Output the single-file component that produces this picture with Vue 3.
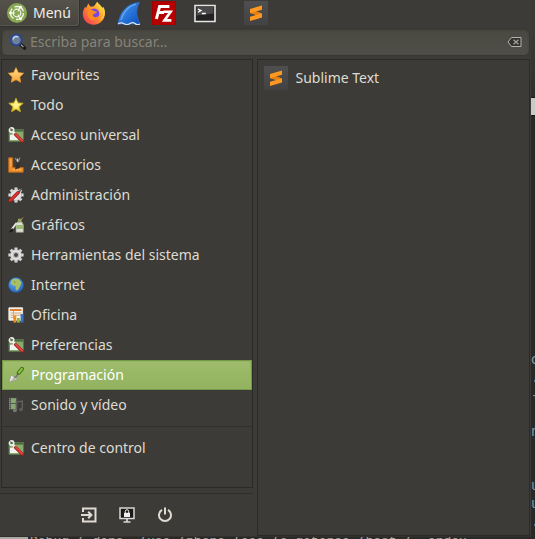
<script setup>
import { ref } from 'vue'

const query = ref('')
const selected = ref('Programación')
const categories = [
  { name: 'Favourites', icon: 'star' },
  { name: 'Todo', icon: 'star-yellow' },
  { name: 'Acceso universal', icon: 'tools' },
  { name: 'Accesorios', icon: 'accessories' },
  { name: 'Administración', icon: 'admin' },
  { name: 'Gráficos', icon: 'graphics' },
  { name: 'Herramientas del sistema', icon: 'gear' },
  { name: 'Internet', icon: 'globe' },
  { name: 'Oficina', icon: 'office' },
  { name: 'Preferencias', icon: 'tools' },
  { name: 'Programación', icon: 'trowel' },
  { name: 'Sonido y vídeo', icon: 'media' },
]
</script>

<template>
  <div class="desktop">
    <svg class="defs" aria-hidden="true">
      <defs>
        <linearGradient id="gStar" x1="0" y1="0" x2="0" y2="1"><stop offset="0" stop-color="#ffe08a" /><stop offset="1" stop-color="#f9a338" /></linearGradient>
        <linearGradient id="gYellow" x1="0" y1="0" x2="0" y2="1"><stop offset="0" stop-color="#fff7b0" /><stop offset="1" stop-color="#e9cf20" /></linearGradient>
        <linearGradient id="gFin" x1="0" y1="0" x2="1" y2="1"><stop offset="0" stop-color="#4a9cf5" /><stop offset="1" stop-color="#0a4fc0" /></linearGradient>
        <linearGradient id="gFire" x1="1" y1="0" x2="0" y2="1"><stop offset="0" stop-color="#fff44f" /><stop offset=".45" stop-color="#ff9a2a" /><stop offset="1" stop-color="#f5275e" /></linearGradient>
        <radialGradient id="gGlobe" cx=".4" cy=".3" r=".8"><stop offset="0" stop-color="#6fb2f2" /><stop offset="1" stop-color="#1f5db5" /></radialGradient>
        <linearGradient id="gTile" x1="0" y1="0" x2="0" y2="1"><stop offset="0" stop-color="#4f4f4f" /><stop offset="1" stop-color="#424243" /></linearGradient>
      </defs>
      <symbol id="i-star" viewBox="0 0 16 16"><path d="M8 .6l2.3 4.9 5.4.7-3.9 3.7.9 5.4L8 12.7 3.3 15.3l.9-5.4L.3 6.2l5.4-.7z" fill="url(#gStar)" stroke="#e8962f" stroke-width=".7" stroke-linejoin="round" /></symbol>
      <symbol id="i-star-yellow" viewBox="0 0 16 16"><path d="M8 1.2l2 4.6 5.2.5-3.9 3.5 1.1 4.9L8 12.2l-4.4 2.5 1.1-4.9L.8 6.3 6 5.8z" fill="url(#gYellow)" stroke="#c3a51c" stroke-width=".9" /><path d="M8 4l1 3 3 .2-2.4 2L10 12l-2-1.3L6 12l.5-2.8-2.4-2L7 7z" fill="#fff58a" /></symbol>
      <symbol id="i-tools" viewBox="0 0 16 16"><path d="M1 2.5h14.5v12H1z" fill="#88ab6c" stroke="#56724a" /><path d="M1.5 3h13.5v1.6H1.5z" fill="#4f6842" /><path d="M2 13V8l5-1 4 6z" fill="#f2f3ee" /><circle cx="3.6" cy="3" r="2.1" fill="none" stroke="#f0f0ee" stroke-width="1.6" /><path d="M0 0l3.4 2.8L1.6 0z" fill="#3c3b37" /><path d="M4.8 4.6l2.4 2.6" stroke="#eee" stroke-width="2.4" /><path d="M7.6 7.6l6.6 6.6" stroke="#951b1b" stroke-width="3.2" stroke-linecap="round" /><path d="M7.7 7.3l6.4 6.4" stroke="#e04340" stroke-width="2" stroke-linecap="round" /></symbol>
      <symbol id="i-accessories" viewBox="0 0 16 16"><path d="M.7.8h4v9.7h10.5v4.7H.7z" fill="#ee922f" stroke="#b9651c" /><path d="M2 3h1.4M2 5.5h1.4M2 8h1.4M6 12v1.4M9 12v1.4M12 12v1.4" stroke="#ffca7d" /><path d="M7.2 1l2.6 4L12 .8" fill="none" stroke="#8c8c8a" stroke-width="1.3" /><path d="M9.6 1.5v3" stroke="#ddd" /><path d="M8.6 5.5h3.2V11L7 12.5z" fill="#30302d" /></symbol>
      <symbol id="i-cog" viewBox="0 0 16 16"><g stroke="#d9d9d9" stroke-width="3"><path d="M8 .4v15.2M.4 8h15.2M2.7 2.7l10.6 10.6M13.3 2.7L2.7 13.3" /></g><circle cx="8" cy="8" r="5.5" fill="#e2e2e2" stroke="#aaa" stroke-width=".5" /></symbol>
      <symbol id="i-gear" viewBox="0 0 16 16"><use href="#i-cog" /><circle cx="8" cy="8" r="3.2" fill="#bcbcbc" /><circle cx="8" cy="8" r="2" fill="#4a4945" /></symbol>
      <symbol id="i-admin" viewBox="0 0 16 16"><use href="#i-cog" /><path d="M14 1.5L10 6" stroke="#555" stroke-width="1.3" /><path d="M10 5.8L2 13.7" stroke="#8c1818" stroke-width="3.4" stroke-linecap="round" /><path d="M9.8 5.8L2 13.5" stroke="#dc3434" stroke-width="2.2" stroke-linecap="round" /></symbol>
      <symbol id="i-graphics" viewBox="0 0 16 16"><path d="M9 5h5l1.4 3v7.3H8V8z" fill="#d9ded0" stroke="#8e9684" stroke-width=".7" /><path d="M10 1.8h3.5V5H10z" fill="#8baa67" /><path d="M8.3 8h7v4h-7z" fill="#9bb975" /><path d="M15 .5l-4 5" stroke="#bb8c42" /><path d="M8.5 6L4 12" stroke="#e6e6e6" stroke-width="2" /><path d="M5 11L.4 15.6l4.3-1.3z" fill="#151515" /></symbol>
      <symbol id="i-globe" viewBox="0 0 16 16"><circle cx="8" cy="8" r="7.6" fill="url(#gGlobe)" stroke="#235493" stroke-width=".6" /><path d="M3.5 3.5c2-2.5 5-2 7.5-1l2.5 3-1.2 3.2-2.7 4.8-2-.6.2-4L5 8.2 2.8 6.8z" fill="#a8bf62" /><path d="M6 4l2 1-2 1z" fill="#6c9e69" /></symbol>
      <symbol id="i-office" viewBox="0 0 16 16"><path d="M.9.8h13.7v12.4H.9z" fill="#f6f3ec" stroke="#e8e4dc" /><path d="M2 2h11.5v2H2z" fill="#dd8031" /><path d="M2.5 6h11M2.5 8.2h11M2.5 10.4h5M5.5 4v8" stroke="#c9a982" /><path d="M5.5 8.5h2.8v7.1H5.5z" fill="#ef8c25" /><path d="M9 11h2.8v4.6H9z" fill="#8fbd35" /><path d="M12.6 7h2.8v8.6h-2.8z" fill="#3873bd" /></symbol>
      <symbol id="i-trowel" viewBox="0 0 16 16"><path d="M.7 15.3l2.5-7.2 6.4 4z" fill="#ecece8" stroke="#92928d" stroke-width=".7" /><path d="M2 14.5L6 10l3 2z" fill="#b9bab5" /><path d="M6.2 10.4c4 0 1.6-2.8 4.4-4.2" fill="none" stroke="#777" stroke-width="1.5" /><path d="M10.8 5.8l3.1-3.9" stroke="#426a18" stroke-width="4" stroke-linecap="round" /><path d="M11 5.5l2.8-3.5" stroke="#87bd3f" stroke-width="2.4" stroke-linecap="round" /></symbol>
      <symbol id="i-media" viewBox="0 0 16 16"><path d="M1 .7h8.4v12H1z" fill="#535952" /><path d="M3 1.2h5v4.9H3zM3 7h5v5H3z" fill="#87a871" /><path d="M1.8 1.2v11" stroke="#aaa" stroke-dasharray="1" /><path d="M8.3 13V5l6-1v8" fill="none" stroke="#62625e" stroke-width="1.4" /><ellipse cx="6.9" cy="13.5" rx="2" ry="1.7" fill="#777773" /><ellipse cx="13" cy="12.5" rx="2" ry="1.7" fill="#5c5c58" /></symbol>
      <symbol id="i-sublime" viewBox="0 0 24 24"><rect width="24" height="24" rx="1" fill="url(#gTile)" /><path d="M18 4.4v4.3l-6 1.9 6 1.9v4L6 20.1v-4.3l6.1-1.9L6 12V8.1z" fill="#ff9820" /><path d="M6 12l6.1 1.9 5.9-1.8v.4L12 10.6z" fill="#e5800f" /></symbol>
    </svg>

    <nav class="panel" aria-label="Panel">
      <button class="menu-button" type="button">
        <svg class="mate" viewBox="0 0 20 20" aria-hidden="true"><circle cx="10" cy="10" r="10" fill="#87a752" /><circle cx="10" cy="10" r="6.5" fill="none" stroke="#f5f7ef" stroke-width="1.3" stroke-dasharray="11 2.6" /><circle cx="10" cy="10" r="3.8" fill="none" stroke="#f5f7ef" stroke-width="1.2" /><path d="M3 10h5M13.5 3.6l-2.6 4.8M13.5 16.4l-2.6-4.8" stroke="#f5f7ef" stroke-width="1.1" /><circle cx="3.4" cy="10" r="1.4" fill="#fff" /><circle cx="13.6" cy="4.2" r="1.4" fill="#fff" /><circle cx="13.6" cy="15.8" r="1.4" fill="#fff" /></svg>
        Menú
      </button>
      <div class="launchers">
        <button type="button" aria-label="Firefox">
          <svg viewBox="0 0 24 24"><path d="M6.2 2.4l2.3 3.3 3.5-.5 3.2-4.5c1.2 2 3.5 3.6 5.2 6l1.2-.8c3.5 8 0 17.2-9.2 17.8C3.5 24.2-1.5 15.5 1.8 8.5L3 5.7l1.2 1.2z" fill="url(#gFire)" /><circle cx="12.2" cy="12.6" r="5.2" fill="#7548df" /><path d="M6 10c2.2-2.3 5-.8 6.2.2l3 .2c-1 2.1-3.3 1.8-4.3 3.4-1 2.2 3.9 3.6 6.3 1-1.1 4.3-6.6 5.7-10 2.4C5.4 15.4 5.2 12.5 6 10z" fill="#ff8a22" /><path d="M15.1 1c-1.5 4 4 5 3.8 10 1-1.3.8-2.8.4-4 4.2 5 1.6 10-2 12 5-1 6.7-6.6 4.4-12.1L20 7.4C18.7 4.6 16 3.5 15.1 1z" fill="#ffd33d" /></svg>
        </button>
        <button type="button" aria-label="Wireshark">
          <svg viewBox="0 0 24 24"><path d="M1 23C3 10 11 2 22.5 1.4 18.5 8 19.2 15.5 23 23z" fill="url(#gFin)" stroke="#2d6cc0" stroke-width=".8" /><path d="M4 19C7 9 12 5 19 3.2" fill="none" stroke="#8fc6ff" stroke-width="1.2" opacity=".6" /><path d="M1 23q3-2 6-.3t6-.2 5 0 5 .5" fill="none" stroke="#d9e6ef" stroke-width="1.2" /></svg>
        </button>
        <button type="button" aria-label="FileZilla">
          <svg viewBox="0 0 24 24"><path d="M0 0h24v24H0z" fill="#b50000" /><path d="M0 0h24v24H0z" fill="none" stroke="#850000" stroke-dasharray="1" /><path d="M4.4 18L7.6 5.4h9.8M6 11.4h6" fill="none" stroke="#fff" stroke-width="3" /><path d="M11.4 10.8h7.2l-6.2 8.6h7" fill="none" stroke="#fff" stroke-width="2.6" /></svg>
        </button>
        <button class="terminal" type="button" aria-label="Terminal">
          <svg viewBox="0 0 24 24"><path d="M2 4.5h20v16H2z" fill="#222" stroke="#e6e6e6" stroke-width="1.6" /><path d="M3.5 6h17v6.5l-17 2z" fill="#494949" /><path d="M5 8l3 1.6-3 1.7M8.8 12.5h4" fill="none" stroke="#fff" stroke-width="1.3" /></svg>
        </button>
        <button class="sublime" type="button" aria-label="Sublime Text"><svg><use href="#i-sublime" /></svg></button>
      </div>
    </nav>

    <div class="workspace">
      <main class="menu">
        <form class="search" role="search" @submit.prevent>
          <svg class="lens" viewBox="0 0 18 18" aria-hidden="true"><path d="M10.5 10.5l5 4.5" stroke="#1b1b1b" stroke-width="3.6" stroke-linecap="round" /><path d="M12 11.8l2.5 2.3" stroke="#aaa" stroke-width="1.2" /><circle cx="7.2" cy="6.8" r="5.4" fill="#6f7f95" stroke="#2b4796" stroke-width="2" /><path d="M4.2 6.5a3 3 0 0 1 5-2.3" fill="none" stroke="#c9d6ea" stroke-width="1.5" /></svg>
          <input v-model="query" type="text" aria-label="Buscar" placeholder="Escriba para buscar…">
          <button class="clear" type="button" aria-label="Borrar" @click="query = ''">
            <svg viewBox="0 0 15 12"><path d="M4.5 1.5h9.5v9H4.5L1 6z" fill="#33332f" stroke="#b5b3a9" /><path d="M6.5 3.8l5 4.4M11.5 3.8l-5 4.4" stroke="#a5a399" stroke-width="1.2" /></svg>
          </button>
        </form>
        <div class="columns">
          <aside class="sidebar">
            <div class="categories">
              <button v-for="c in categories" :key="c.name" type="button" class="row" :class="{ active: selected === c.name }" @click="selected = c.name">
                <svg aria-hidden="true"><use :href="'#i-' + c.icon" /></svg>{{ c.name }}
              </button>
              <hr>
              <button type="button" class="row"><svg aria-hidden="true"><use href="#i-tools" /></svg>Centro de control</button>
            </div>
            <footer class="session">
              <button type="button" aria-label="Cerrar sesión"><svg viewBox="0 0 16 16"><path d="M2 5V1.5h12.5v13H2V11M0 8h10M7.2 4.8L10.4 8l-3.2 3.2" fill="none" stroke="#dfdbd2" stroke-width="2" /></svg></button>
              <button type="button" aria-label="Bloquear pantalla"><svg viewBox="0 0 16 16"><path d="M1 1h14v10.5H1z" fill="#191919" stroke="#d7d7d3" stroke-width="1.5" /><path d="M5 5.8h6V10H5z" fill="#eee" /><path d="M6.3 6V4.4a1.7 1.7 0 0 1 3.4 0V6" fill="none" stroke="#eee" /><path d="M8 12v3M4.5 15h7" stroke="#d7d7d3" stroke-width="1.7" /></svg></button>
              <button type="button" aria-label="Apagar"><svg viewBox="0 0 16 16"><path d="M5 2.9a6 6 0 1 0 6 0M8 .5v7" fill="none" stroke="#dfdbd2" stroke-width="2" /></svg></button>
            </footer>
          </aside>
          <section class="apps">
            <button type="button" class="app"><svg aria-hidden="true"><use href="#i-sublime" /></svg>Sublime Text</button>
          </section>
        </div>
      </main>
      <div class="behind">
        <div class="behind-title"></div>
        <div class="behind-bar"></div>
        <pre class="behind-code">o
.
-

n


u
u
.</pre>
      </div>
    </div>
    <div class="console"><span class="scroll-end"></span><code>Debug ( dans. (use (phone (eee (e getenee (best (, endex</code></div>
  </div>
</template>

<style>
body { margin: 0; background: #292928; }
</style>

<style scoped>
.desktop {
  display: flex;
  flex-direction: column;
  height: 100vh;
  overflow: hidden;
  background: #292928;
  color: #dfdbd2;
  font: 14px/20px "Noto Sans", "Open Sans", sans-serif;
}
* { box-sizing: border-box; }
.defs { position: absolute; width: 0; height: 0; }
svg { display: block; flex: none; }
button { font: inherit; color: inherit; border: 0; background: none; padding: 0; margin: 0; display: flex; align-items: center; text-align: left; }
.panel { display: flex; flex: none; height: 27px; background: #3c3b37; }
.menu-button { width: 80px; padding-left: 7px; gap: 6px; border: 1px solid #302f2c; border-top: 0; border-left: 0; border-radius: 0 0 3px 0; background: linear-gradient(#545249, #46443e); box-shadow: inset -1px -1px #59574f; color: #f0ede5; }
.mate { width: 20px; height: 20px; }
.launchers { display: flex; align-items: flex-start; padding: 1px 0 0 2px; gap: 11px; }
.launchers svg { width: 24px; height: 24px; }
.terminal { margin-left: 6px; }
.sublime { margin-left: 16px; }
.workspace { display: flex; flex: 1; min-height: 0; }
.menu { flex: 1; min-width: 0; display: flex; flex-direction: column; background: #3c3b37; border-bottom: 1px solid #32312e; }
.search { display: flex; align-items: center; flex: none; height: 28px; margin: 1px 1px 3px; padding: 0 7px; border: 1px solid #383733; border-radius: 6px; background: linear-gradient(#494841, #4f4e47); box-shadow: inset 0 1px 2px #3b3a36; }
.lens { width: 18px; height: 18px; }
.search input { flex: 1; min-width: 0; border: 0; outline: 0; background: none; padding: 0 0 0 3px; color: #dfdbd2; font: inherit; }
.search input::placeholder { color: #85837a; opacity: 1; }
.clear svg { width: 15px; height: 12px; }
.columns { display: grid; grid-template-columns: 16fr 17fr; flex: 1; min-height: 0; }
.sidebar { display: flex; flex-direction: column; min-width: 0; padding-right: 4px; }
.categories { flex: 1; margin-left: 1px; border: 1px solid #2b2a27; }
.row { width: 100%; height: 30px; padding: 0 6px; gap: 7px; }
.row svg { width: 16px; height: 16px; }
.row.active { color: #fff; background: linear-gradient(#9fbd6c, #92b25f); border: 1px solid #759849; padding: 0 5px; box-shadow: inset 0 0 0 1px #93b65f; }
hr { margin: 6px 0; border: 0; border-top: 1px solid #30302c; }
.session { display: flex; justify-content: center; align-items: center; flex: none; height: 43px; gap: 22px; margin-top: 5px; border-top: 1px solid #302f2c; }
.session svg { width: 16px; height: 16px; }
.apps { margin-right: 1px; padding: 6px; border: 1px solid #2b2a27; }
.app { width: 100%; gap: 7px; }
.app svg { width: 24px; height: 24px; }
.behind { flex: none; width: 4px; overflow: hidden; }
.behind-title { height: 70px; background: linear-gradient(#3c3b37, #302f2d); }
.behind-bar { height: 19px; border-top: 1px solid #1a1a1a; border-bottom: 1px solid #1a1a1a; background: #c9c9c7; }
.behind-code { margin: 235px 0 0; font: 14px/18px "Liberation Mono", monospace; color: #8998a0; }
.console { display: flex; flex: none; height: 2px; overflow: hidden; color: #b5aaa4; }
.scroll-end { width: 28px; height: 2px; background: #aaa9a6; }
.console code { flex: none; padding-left: 2px; font: 13px/10px "Liberation Mono", monospace; }
</style>
